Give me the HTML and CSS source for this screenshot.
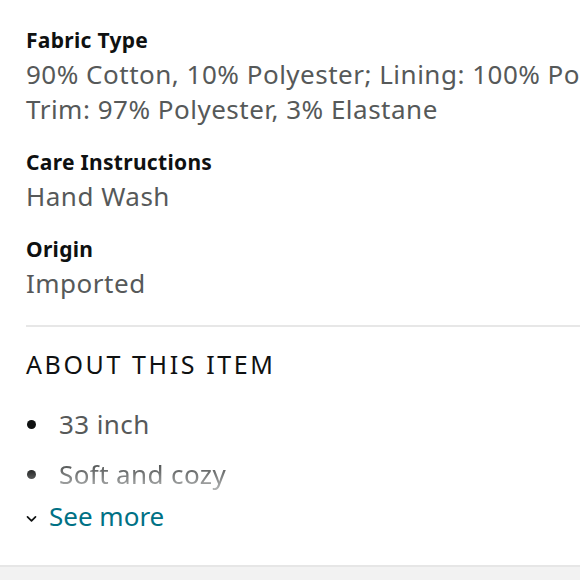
FILE: index.html
```html
<!DOCTYPE html>
<html>
<head>
<meta charset="utf-8">
<link rel="stylesheet" href="styles.css">
</head>
<body>
<div class="page">
  <div class="details">
    <div class="attr">
      <div class="attr-name">Fabric Type</div>
      <div class="attr-value">90% Cotton, 10% Polyester; Lining: 100% Polyester;<br>Trim: 97% Polyester, 3% Elastane</div>
    </div>
    <div class="attr">
      <div class="attr-name">Care Instructions</div>
      <div class="attr-value">Hand Wash</div>
    </div>
    <div class="attr">
      <div class="attr-name">Origin</div>
      <div class="attr-value">Imported</div>
    </div>
  </div>
  <div class="about">
    <h2 class="about-title">ABOUT THIS ITEM</h2>
    <ul class="bullets">
      <li>33 inch</li>
      <li class="fade">Soft and cozy</li>
    </ul>
    <a class="see-more" href="#"><svg class="chev" width="11" height="8" viewBox="0 0 11 8"><path d="M1.5 1.8 L5.5 5.8 L9.5 1.8" fill="none" stroke="#0f1111" stroke-width="1.7" stroke-linecap="round" stroke-linejoin="round"/></svg><span>See more</span></a>
  </div>
  <div class="footer-band"></div>
</div>
</body>
</html>
```
FILE: styles.css
```css
html, body {
  margin: 0;
  padding: 0;
  background: #fff;
}
body {
  font-family: "Noto Sans", "Open Sans", sans-serif;
  color: #0f1111;
  width: 580px;
  height: 580px;
  overflow: hidden;
}
.page {
  display: flex;
  flex-direction: column;
  height: 580px;
  overflow: hidden;
}
.details {
  padding: 26px 0 0 26px;
  display: flex;
  flex-direction: column;
  gap: 21px;
}
.attr {
  display: flex;
  flex-direction: column;
  gap: 3px;
}
.attr-name {
  font-size: 21px;
  line-height: 28px;
  font-weight: 700;
  letter-spacing: 0.3px;
  color: #0f1111;
}
.attr-value {
  font-size: 26px;
  line-height: 35px;
  letter-spacing: 0.5px;
  color: #565959;
  white-space: nowrap;
}
.about {
  margin: 24px 0 0 26px;
  border-top: 2px solid #e7e7e7;
  flex: 1;
}
.about-title {
  margin: 0;
  padding-top: 22px;
  font-size: 25px;
  line-height: 30px;
  font-weight: 400;
  letter-spacing: 2.6px;
  color: #0f1111;
}
.bullets {
  list-style: none;
  margin: 28px 0 0 0;
  padding: 0;
}
.bullets li {
  position: relative;
  padding-left: 33px;
  font-size: 26px;
  line-height: 35px;
  letter-spacing: 0.4px;
  color: #565959;
  margin-bottom: 15px;
}
.bullets li::before {
  content: "";
  position: absolute;
  left: 1px;
  top: 13px;
  width: 9px;
  height: 9px;
  border-radius: 50%;
  background: #0f1111;
}
.bullets li.fade {
  margin-bottom: 7px;
  -webkit-mask-image: linear-gradient(to bottom, #000 25%, rgba(0,0,0,0.4) 100%);
  mask-image: linear-gradient(to bottom, #000 25%, rgba(0,0,0,0.4) 100%);
}
.see-more {
  display: flex;
  align-items: center;
  gap: 12px;
  font-size: 26px;
  line-height: 35px;
  color: #007185;
  text-decoration: none;
}
.chev {
  flex: none;
  margin-top: 5px;
}
.footer-band {
  height: 13px;
  background: #f2f2f2;
  border-top: 2px solid #e6e6e6;
  flex: none;
}
```
